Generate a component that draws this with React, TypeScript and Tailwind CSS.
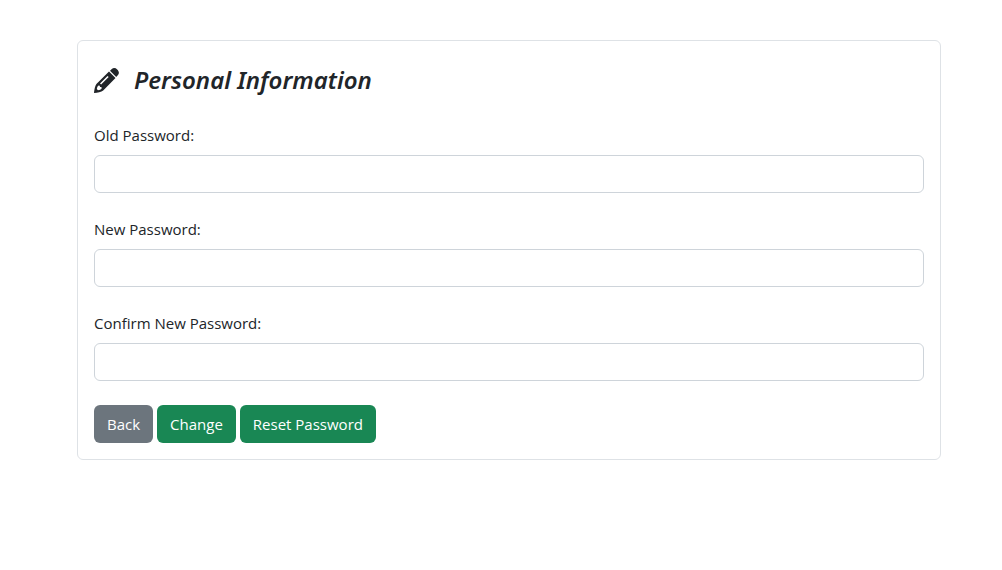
const fields = [
  { id: "old-password", label: "Old Password:" },
  { id: "new-password", label: "New Password:" },
  { id: "confirm-password", label: "Confirm New Password:" },
];

const buttonBase = "rounded-md px-[13px] py-[7px] text-[15px] leading-6 text-white";

function PencilIcon() {
  return (
    <svg viewBox="0 0 25 25" className="size-[25px]" aria-hidden="true">
      <path
        fill="currentColor"
        d="M16 2.8 17.8 1.1C19.4-.4 21.5-.2 23.2 1.5 25.1 3.3 25.4 5.5 24 7.1L22.2 9Z"
      />
      <path
        fill="currentColor"
        fillRule="evenodd"
        d="M15 3.6 21.5 10.1 9.2 22.4C7.3 24 3.5 24.4.3 25 0 25 0 24.8 0 24.6.5 21.4.9 18 2.4 16.1ZM13.5 8 6 15.4 7.1 16.5 14.7 9.1ZM4.5 17.5 3.4 18.8 2.8 21 4 22.2 6.2 21.7 7.7 20.6 7.4 19 5.9 19.1 5.9 17.7Z"
      />
    </svg>
  );
}

export default function App() {
  return (
    <main className="pt-10 pr-[61px] pl-[77px] font-['Open_Sans','Noto_Sans',sans-serif] text-[#212529]">
      <form
        className="rounded-md border border-[#dee2e6] p-4"
        onSubmit={(event) => event.preventDefault()}
      >
        <h1 className="mt-1 mb-6 flex h-[38px] items-center gap-[15px] font-['Noto_Sans','Open_Sans',sans-serif] text-2xl font-semibold italic">
          <PencilIcon />
          Personal Information
        </h1>
        {fields.map((field) => (
          <div key={field.id} className="mb-6 flex flex-col gap-2">
            <label htmlFor={field.id} className="text-[15px] leading-6">
              {field.label}
            </label>
            <input
              id={field.id}
              type="password"
              className="h-[38px] w-full rounded-md border border-[#ced4da] bg-white px-3"
            />
          </div>
        ))}
        <div className="flex gap-1">
          <button type="button" className={`${buttonBase} bg-[#6c757d]`}>Back</button>
          <button type="submit" className={`${buttonBase} bg-[#198754]`}>Change</button>
          <button type="reset" className={`${buttonBase} bg-[#198754]`}>Reset Password</button>
        </div>
      </form>
    </main>
  );
}
